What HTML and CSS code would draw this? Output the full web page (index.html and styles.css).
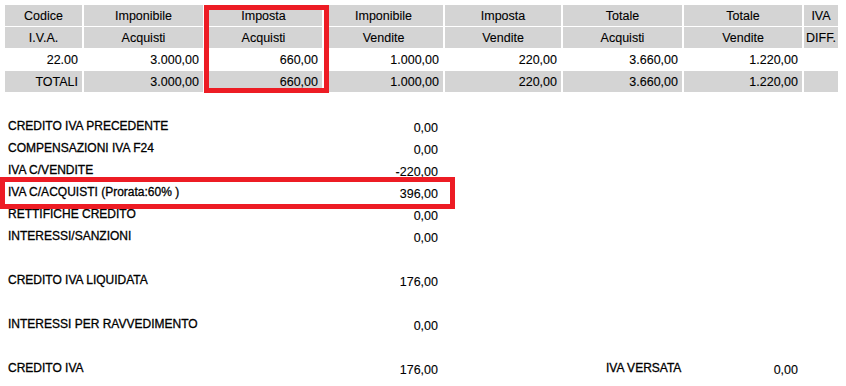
FILE: index.html
```html
<!DOCTYPE html>
<html lang="it">
<head>
<meta charset="utf-8">
<title>Liquidazione IVA</title>
<link rel="stylesheet" href="styles.css">
</head>
<body>
<div class="table-wrap">
  <div class="grid">
    <div class="cell head">Codice</div>
    <div class="cell head">Imponibile</div>
    <div class="cell head">Imposta</div>
    <div class="cell head">Imponibile</div>
    <div class="cell head">Imposta</div>
    <div class="cell head">Totale</div>
    <div class="cell head">Totale</div>
    <div class="cell head">IVA</div>

    <div class="cell head">I.V.A.</div>
    <div class="cell head">Acquisti</div>
    <div class="cell head">Acquisti</div>
    <div class="cell head">Vendite</div>
    <div class="cell head">Vendite</div>
    <div class="cell head">Acquisti</div>
    <div class="cell head">Vendite</div>
    <div class="cell head">DIFF.</div>

    <div class="cell num">22.00</div>
    <div class="cell num">3.000,00</div>
    <div class="cell num">660,00</div>
    <div class="cell num">1.000,00</div>
    <div class="cell num">220,00</div>
    <div class="cell num">3.660,00</div>
    <div class="cell num">1.220,00</div>
    <div class="cell num"></div>

    <div class="cell num total">TOTALI</div>
    <div class="cell num total">3.000,00</div>
    <div class="cell num total">660,00</div>
    <div class="cell num total">1.000,00</div>
    <div class="cell num total">220,00</div>
    <div class="cell num total">3.660,00</div>
    <div class="cell num total">1.220,00</div>
    <div class="cell num total"></div>
  </div>
  <div class="mark mark-col"></div>
</div>

<div class="summary">
  <div class="row"><span class="label">CREDITO IVA PRECEDENTE</span><span class="value">0,00</span></div>
  <div class="row"><span class="label">COMPENSAZIONI IVA F24</span><span class="value">0,00</span></div>
  <div class="row"><span class="label">IVA C/VENDITE</span><span class="value">-220,00</span></div>
  <div class="row"><span class="label">IVA C/ACQUISTI (Prorata:60% )</span><span class="value">396,00</span></div>
  <div class="row"><span class="label">RETTIFICHE CREDITO</span><span class="value">0,00</span></div>
  <div class="row"><span class="label">INTERESSI/SANZIONI</span><span class="value">0,00</span></div>
  <div class="row spaced"><span class="label">CREDITO IVA LIQUIDATA</span><span class="value">176,00</span></div>
  <div class="row spaced"><span class="label">INTERESSI PER RAVVEDIMENTO</span><span class="value">0,00</span></div>
  <div class="row spaced"><span class="label">CREDITO IVA</span><span class="value">176,00</span><span></span><span class="label">IVA VERSATA</span><span class="value">0,00</span></div>
  <div class="mark mark-row"></div>
</div>
</body>
</html>
```

FILE: styles.css
```css
html, body {
  margin: 0;
  background: #ffffff;
}

body {
  padding: 5px;
  font-family: "Liberation Sans", Arial, sans-serif;
  color: #000000;
}

.table-wrap {
  position: relative;
  width: 833px;
}

.grid {
  display: grid;
  grid-template-columns: 77px 119px 117px 119px 116px 119px 118px 34px;
  grid-auto-rows: 21px;
  column-gap: 2px;
  row-gap: 1px;
  font-size: 12.5px;
}

.cell {
  height: 21px;
  line-height: 23px;
  padding: 0 4px;
  white-space: nowrap;
  overflow: visible;
  -webkit-text-stroke: 0.1px #000000;
}

.head {
  background: #d4d4d4;
  text-align: center;
  padding: 0;
}

.num {
  text-align: right;
}

.total {
  background: #d4d4d4;
}

.mark {
  position: absolute;
  border: 5px solid #ed1c24;
  box-sizing: border-box;
  pointer-events: none;
}

.mark-col {
  left: 199px;
  top: 0;
  width: 125px;
  height: 88px;
}

.summary {
  position: relative;
  margin-top: 23px;
}

.row {
  display: grid;
  grid-template-columns: 330px 100px 168px 120px 72px;
  height: 22px;
  align-items: start;
  padding-left: 3px;
}

.row.spaced {
  margin-top: 22px;
}

.label {
  font-size: 12px;
  line-height: 22px;
  white-space: nowrap;
  -webkit-text-stroke: 0.3px #000000;
}

.value {
  font-size: 12.5px;
  line-height: 26px;
  text-align: right;
  white-space: nowrap;
  -webkit-text-stroke: 0.1px #000000;
}

.mark-row {
  left: -5px;
  top: 62px;
  width: 455px;
  height: 32px;
}
```
